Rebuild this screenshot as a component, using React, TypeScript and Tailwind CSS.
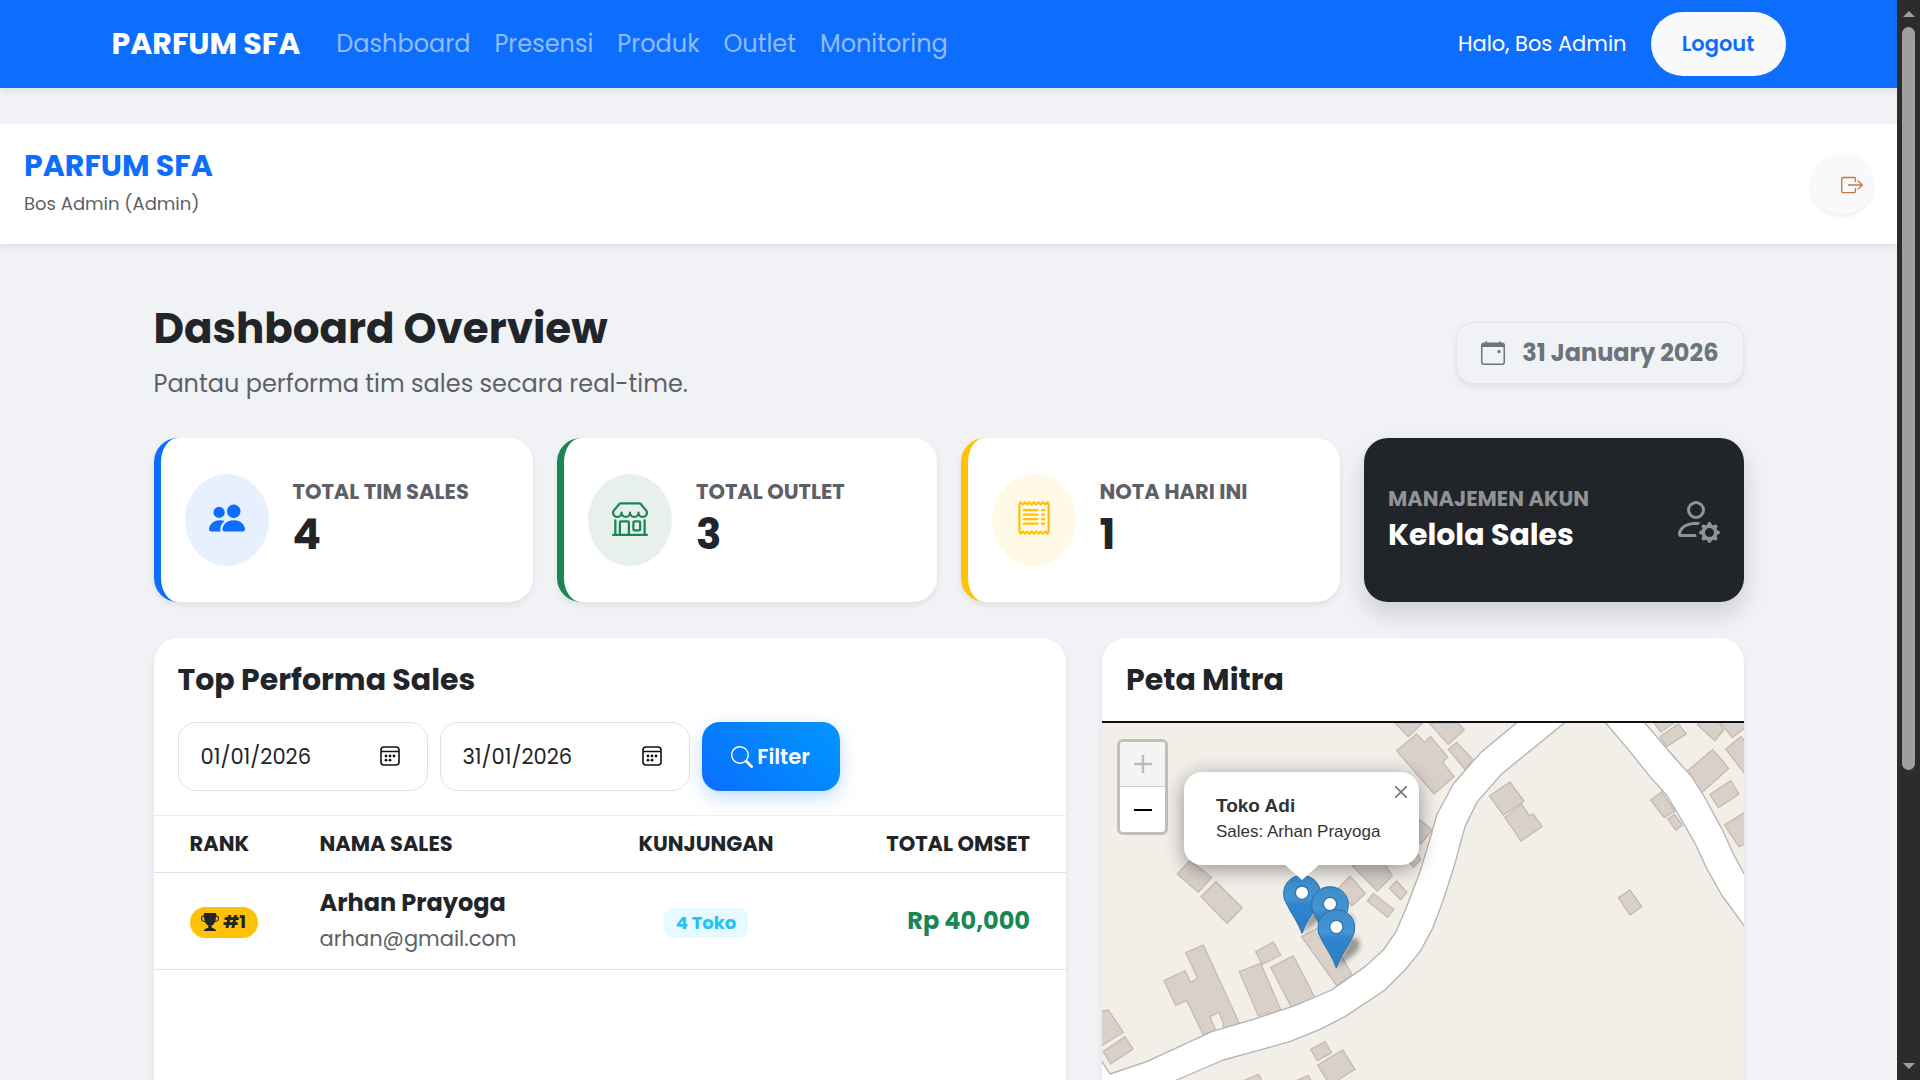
import React, { useState } from "react";
import {
  BsBoxArrowRight,
  BsCalendarEvent,
  BsPeopleFill,
  BsPersonGear,
  BsReceipt,
  BsSearch,
  BsShop,
  BsTrophyFill,
} from "react-icons/bs";

const navLinks = ["Dashboard", "Presensi", "Produk", "Outlet", "Monitoring"];

const stats = [
  {
    label: "TOTAL TIM SALES",
    value: 4,
    icon: BsPeopleFill,
    border: "border-[#0d6efd]",
    bubble: "bg-[#e7f0ff] text-[#0d6efd]",
  },
  {
    label: "TOTAL OUTLET",
    value: 3,
    icon: BsShop,
    border: "border-[#198754]",
    bubble: "bg-[#e8f0ee] text-[#198754]",
  },
  {
    label: "NOTA HARI INI",
    value: 1,
    icon: BsReceipt,
    border: "border-[#ffc107]",
    bubble: "bg-[#fff9e6] text-[#ffc107]",
  },
];

const ranking = [
  {
    rank: 1,
    name: "Arhan Prayoga",
    email: "arhan@gmail.com",
    visits: "4 Toko",
    total: "Rp 40,000",
  },
];

const buildings = [
  "915,279 955,320 998,279",
  "1018,279 1075,343 1123,300 1105,279",
  "980,312 1003,337 1022,320 1073,380 1058,397 1092,440 1032,492 920,362",
  "1075,358 1100,337 1148,388 1125,418",
  "1198,498 1260,456 1302,513 1240,555",
  "1245,562 1295,523 1318,557 1330,552 1356,590 1293,633",
  "1585,803 1620,780 1655,830 1620,855",
  "1682,510 1715,485 1755,543 1723,563",
  "1733,567 1753,553 1777,585 1758,601",
  "1690,276 1712,306 1755,276",
  "1710,320 1765,282 1789,312 1730,350",
  "1790,425 1868,358 1916,415 1835,488",
  "1860,493 1922,452 1947,492 1885,533",
  "1822,285 1875,332 1901,300 1886,276 1828,276",
  "1890,276 1927,323 1970,290 1970,276",
  "1907,357 1953,320 1970,340 1970,438",
  "1903,585 1970,543 1970,640 1947,651",
  "262,732 300,692 365,742 325,787",
  "333,800 378,755 457,833 411,880",
  "222,1052 285,1023 302,1057 323,1045 287,968 340,945 449,1182 400,1195 400,1180 387,1147 360,1160 377,1200 340,1214 290,1112 257,1126",
  "497,965 550,936 572,975 517,1003",
  "448,1025 512,1000 575,1145 540,1158 532,1147 505,1158",
  "542,1012 610,978 675,1103 605,1133",
  "635,920 700,885 787,1035 740,1067",
  "745,775 780,738 826,790 785,828",
  "785,705 870,680 907,737 862,783",
  "832,813 850,790 911,838 893,862",
  "898,775 920,753 951,787 932,809",
  "960,600 990,570 1027,600 993,642",
  "955,690 985,675 992,690 970,712",
  "30,1145 55,1140 100,1207 30,1250",
  "40,1265 105,1220 129,1257 62,1302",
  "662,1258 705,1235 725,1268 682,1292",
  "683,1305 758,1260 795,1318 720,1365",
  "420,1370 505,1333 540,1390 460,1420",
  "600,1360 655,1337 680,1380 620,1400",
];

const pins = [
  { x: 636, y: 910 },
  { x: 720, y: 944 },
  { x: 739, y: 1013 },
];

function StatCard({ label, value, icon: Icon, border, bubble }: (typeof stats)[number]) {
  return (
    <div
      className={`flex h-[164px] items-center rounded-3xl border-l-[7px] bg-white pl-6 shadow-[0_3px_6px_rgba(0,0,0,0.075)] ${border}`}
    >
      <div className={`flex h-[92px] w-[84px] items-center justify-center rounded-[50%] pb-1 ${bubble}`}>
        <Icon className="size-9" />
      </div>
      <div className="ml-6 pb-0.5">
        <div className="text-[21px]/8 font-bold text-[#5c6167]">{label}</div>
        <div className="text-[42px]/[54px] font-bold">{value}</div>
      </div>
    </div>
  );
}

function DateField({ id, label, initial }: { id: string; label: string; initial: string }) {
  const [value, setValue] = useState(initial);

  return (
    <div className="relative w-[250px]">
      <input
        id={id}
        aria-label={label}
        className="h-[69px] w-full rounded-[18px] border border-[#dee2e6] bg-white pr-16 pl-[22px] text-[21px] focus:outline-none"
        value={value}
        onChange={(e) => setValue(e.target.value)}
      />
      <svg
        viewBox="0 0 20 20"
        className="pointer-events-none absolute top-6 right-7 size-5"
        fill="none"
        stroke="#111"
        strokeWidth="1.6"
      >
        <rect x="1" y="1" width="18" height="18" rx="3" />
        <path d="M1 5.5h18" />
        <g fill="#111" stroke="none">
          <circle cx="6" cy="10" r="1.4" />
          <circle cx="10" cy="10" r="1.4" />
          <circle cx="14" cy="10" r="1.4" />
          <circle cx="6" cy="14.2" r="1.4" />
          <circle cx="10" cy="14.2" r="1.4" />
        </g>
      </svg>
    </div>
  );
}

function MapDrawing() {
  return (
    <svg
      viewBox="36 279 1926 1800"
      preserveAspectRatio="xMinYMin slice"
      className="block h-full w-full bg-[#f2efe9]"
    >
      <defs>
        <linearGradient id="pin" x1="0" y1="0" x2="0" y2="1">
          <stop offset="0" stopColor="#3b8dcb" />
          <stop offset="0.4" stopColor="#4694d1" />
          <stop offset="0.5" stopColor="#2f86cc" />
          <stop offset="1" stopColor="#2a7fc8" />
        </linearGradient>
        <filter id="soft" x="-50%" y="-50%" width="200%" height="200%">
          <feGaussianBlur stdDeviation="8" />
        </filter>
      </defs>
      <g fill="#d9d0c9" stroke="#c8bab0" strokeWidth="4">
        {buildings.map((points) => (
          <polygon key={points} points={points} />
        ))}
      </g>
      <g fill="#fff" stroke="#b5b3b0" strokeWidth="4" strokeLinejoin="round">
        <path d="M1290 270 1170 370 1090 462 1040 555 1025 610 990 725 950 830 918 905 880 960 825 1010 725 1080 620 1125 500 1165 365 1205 170 1295 60 1332 20 1270V1455L140 1400 260 1350 400 1290 600 1235 690 1198 765 1160 885 1080 945 1020 990 965 1028 895 1060 810 1095 700 1125 590 1162 515 1235 432 1434 270Z" />
        <path d="M1540 270 1620 365 1680 440 1730 495 1775 570 1815 640 1850 715 1895 795 1975 905V755L1930 672 1900 605 1840 495 1805 440 1760 390 1657 270Z" />
      </g>
      {pins.map(({ x, y }) => (
        <path
          key={x}
          d={`M${x} ${y} l36 -82 q22 -20 34 4 q6 22 -24 44z`}
          fill="#000"
          opacity="0.36"
          filter="url(#soft)"
        />
      ))}
      {pins.map(({ x, y }) => (
        <g key={x} transform={`translate(${x} ${y})`}>
          <path
            d="M0 0C-12 -34 -34 -62 -46 -88A54 54 0 0 1 -55 -121A55 53 0 0 1 55 -121A54 54 0 0 1 46 -88C34 -62 12 -34 0 0Z"
            fill="url(#pin)"
            stroke="#2e6fa8"
            strokeWidth="3"
          />
          <circle cy="-122" r="20" fill="#fff" stroke="#2e78b5" strokeWidth="4" />
        </g>
      ))}
    </svg>
  );
}

function PartnerMap() {
  const [popup, setPopup] = useState(true);

  return (
    <div className="relative h-[600px] overflow-hidden">
      <MapDrawing />
      <div className="absolute top-4 left-[15px] flex w-[51px] flex-col overflow-hidden rounded-md border-3 border-[#c2bfba] bg-white">
        <button
          aria-label="Zoom in"
          disabled
          className="flex h-[45px] items-center justify-center border-b border-[#ccc] bg-[#f4f4f4] text-[#bbb]"
        >
          <svg viewBox="0 0 20 20" className="size-5" stroke="currentColor" strokeWidth="2.4">
            <path d="M1 10h18M10 1v18" />
          </svg>
        </button>
        <button aria-label="Zoom out" className="flex h-[45px] items-center justify-center text-black">
          <svg viewBox="0 0 20 20" className="size-5" stroke="currentColor" strokeWidth="2">
            <path d="M1 10h18" />
          </svg>
        </button>
      </div>
      {popup && (
        <div className="absolute top-[49px] left-[82px] font-['Liberation_Sans',Arial,sans-serif] text-[#333]">
          <div className="h-[93px] w-[235px] rounded-[18px] bg-white pt-5 pl-8 shadow-[0_4px_20px_rgba(0,0,0,0.4)]">
            <div className="text-[19px]/[27px] font-bold">Toko Adi</div>
            <div className="text-[17px]/[25px]">Sales: Arhan Prayoga</div>
          </div>
          <svg viewBox="0 0 36 16" className="absolute top-[92px] left-[100px] h-4 w-9">
            <path d="M0 0h36L18 16z" fill="#fff" />
          </svg>
          <button
            aria-label="Close"
            onClick={() => setPopup(false)}
            className="absolute top-2 right-1.5 flex size-6 items-center justify-center text-[#757575]"
          >
            <svg viewBox="0 0 12 12" className="size-3" stroke="currentColor" strokeWidth="1.6">
              <path d="M0 0 12 12M12 0 0 12" />
            </svg>
          </button>
        </div>
      )}
    </div>
  );
}

function ScrollTrack() {
  return (
    <div className="flex w-[23px] shrink-0 flex-col items-center bg-[#2c2c2c] text-[#9f9f9f]">
      <svg viewBox="0 0 12 6" className="mt-[11px] h-1.5 w-3" fill="currentColor">
        <path d="M6 0 12 6H0z" />
      </svg>
      <div className="my-2.5 min-h-0 w-[13px] flex-1">
        <div className="h-[72.4%] rounded-full bg-[#9f9f9f]" />
      </div>
      <svg viewBox="0 0 12 6" className="mb-[11px] h-1.5 w-3" fill="currentColor">
        <path d="M0 0h12L6 6z" />
      </svg>
    </div>
  );
}

function App() {
  return (
    <div className="flex h-screen overflow-hidden bg-[#f0f2f5] font-[Poppins,Inter,sans-serif] text-[#212529]">
      <div className="min-w-0 flex-1 overflow-hidden">
        <nav className="relative bg-[#0d6efd] shadow-[0_3px_6px_rgba(0,0,0,0.075)]">
          <div className="mx-auto flex h-[88px] max-w-[1674px] items-center text-white">
            <a href="#" className="text-3xl font-bold">
              PARFUM SFA
            </a>
            <div className="ml-9 flex gap-6 text-2xl text-[#8fbdfe]">
              {navLinks.map((link) => (
                <a key={link} href="#">
                  {link}
                </a>
              ))}
            </div>
            <span className="ml-auto text-[21px]">Halo, Bos Admin</span>
            <button className="ml-6 h-16 w-[135px] rounded-full bg-[#f8f9fa] text-[21px] font-semibold text-[#0d6efd]">
              Logout
            </button>
          </div>
        </nav>

        <header className="mt-9 flex h-30 items-center justify-between bg-white px-6 shadow-[0_3px_6px_rgba(0,0,0,0.075)]">
          <div>
            <div className="text-3xl/9 font-bold text-[#0d6efd]">PARFUM SFA</div>
            <div className="mt-1 text-lg/8 text-[#5c6167]">Bos Admin (Admin)</div>
          </div>
          <button
            aria-label="Logout"
            className="h-15 w-[62px] rounded-full bg-[#f8f9fa] pt-0.5 pl-[30px] text-[#c8763e] shadow-[0_2px_5px_rgba(0,0,0,0.08)]"
          >
            <BsBoxArrowRight className="size-[22px]" />
          </button>
        </header>

        <main className="mx-auto max-w-[1590px] pt-[60px]">
          <div className="flex h-[98px] items-center justify-between">
            <div>
              <h1 className="text-[42px]/[50px] font-bold">Dashboard Overview</h1>
              <p className="mt-3 text-2xl/9 text-[#5c6167]">Pantau performa tim sales secara real-time.</p>
            </div>
            <div className="flex h-[62px] items-center gap-[17px] rounded-[18px] border border-[#e2e5e9] px-6 text-2xl font-bold text-[#6c757d] shadow-[0_3px_6px_rgba(0,0,0,0.075)]">
              <BsCalendarEvent className="size-6" />
              31 January 2026
            </div>
          </div>

          <div className="mt-9 grid grid-cols-4 gap-6">
            {stats.map((s) => (
              <StatCard key={s.label} {...s} />
            ))}
            <a
              href="#"
              className="flex h-[164px] items-center justify-between rounded-3xl bg-[#212529] px-6 pb-0.5 shadow-[0_12px_24px_rgba(0,0,0,0.15)]"
            >
              <div>
                <div className="text-[21px]/8 font-bold text-[#909294]">MANAJEMEN AKUN</div>
                <div className="text-3xl/10 font-bold text-white">Kelola Sales</div>
              </div>
              <BsPersonGear className="size-12 text-[#909294]" />
            </a>
          </div>

          <div className="mt-9 grid grid-cols-12 gap-9">
            <section className="col-span-7 overflow-hidden rounded-3xl bg-white shadow-[0_3px_6px_rgba(0,0,0,0.075)]">
              <div className="border-b border-[#eceef0] p-6">
                <h2 className="text-3xl/9 font-bold">Top Performa Sales</h2>
                <form className="mt-6 flex gap-3" onSubmit={(e) => e.preventDefault()}>
                  <DateField id="from" label="Dari tanggal" initial="01/01/2026" />
                  <DateField id="to" label="Sampai tanggal" initial="31/01/2026" />
                  <button className="flex h-[69px] w-[138px] items-center justify-center gap-1 rounded-[18px] bg-linear-45 from-[#0d6efd] to-[#0596ff] text-[21px] font-semibold text-white shadow-[0_6px_18px_rgba(13,110,253,0.25)]">
                    <BsSearch className="size-[22px]" />
                    Filter
                  </button>
                </form>
              </div>
              <table className="w-full table-fixed text-left">
                <thead>
                  <tr className="h-14 border-b border-[#dee2e6] text-[21px]">
                    <th className="w-[154px] pl-9 font-bold">RANK</th>
                    <th className="pl-3 font-bold">NAMA SALES</th>
                    <th className="w-[230px] text-center font-bold">KUNJUNGAN</th>
                    <th className="w-[245px] pr-9 text-right font-bold">TOTAL OMSET</th>
                  </tr>
                </thead>
                <tbody>
                  {ranking.map((r) => (
                    <tr key={r.email} className="h-[97px] border-b border-[#dee2e6]">
                      <td className="pt-1 pl-9">
                        <span className="inline-flex h-[31px] w-[68px] items-center justify-center gap-1 rounded-full bg-[#ffc107] text-lg font-bold">
                          <BsTrophyFill className="size-[18px]" />
                          #{r.rank}
                        </span>
                      </td>
                      <td className="pl-3">
                        <div className="text-2xl/9 font-bold">{r.name}</div>
                        <div className="text-[21px]/9 text-[#5c6167]">{r.email}</div>
                      </td>
                      <td className="pt-1 text-center">
                        <span className="inline-flex h-[30px] items-center rounded-[9px] bg-[#e7faff] px-3 text-lg font-bold text-[#1fc4f4]">
                          {r.visits}
                        </span>
                      </td>
                      <td className="pr-9 text-right text-2xl font-bold text-[#198754]">{r.total}</td>
                    </tr>
                  ))}
                </tbody>
              </table>
            </section>

            <section className="col-span-5 overflow-hidden rounded-3xl bg-white shadow-[0_3px_6px_rgba(0,0,0,0.075)]">
              <h2 className="border-b-2 border-[#111] px-6 pt-6 pb-[23px] text-3xl/9 font-bold">Peta Mitra</h2>
              <PartnerMap />
            </section>
          </div>
        </main>
      </div>
      <ScrollTrack />
    </div>
  );
}

export default App;
